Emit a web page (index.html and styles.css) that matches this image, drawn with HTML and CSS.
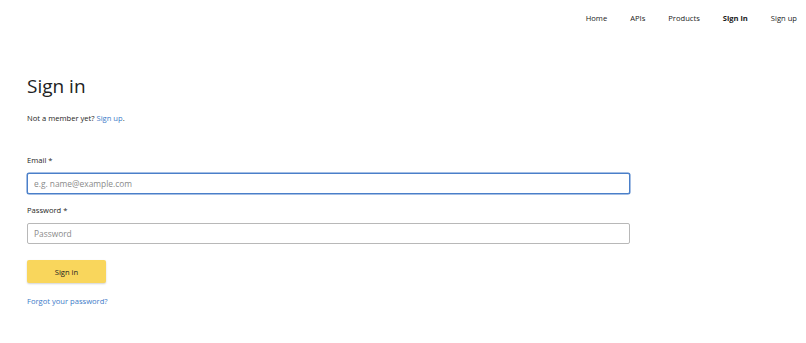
FILE: index.html
```html
<!DOCTYPE html>
<html>
<head>
<meta charset="utf-8">
<link rel="stylesheet" href="styles.css">
</head>
<body>
<header class="topbar">
  <nav class="nav">
    <a class="nav-link" href="#">Home</a>
    <a class="nav-link" href="#">APIs</a>
    <a class="nav-link" href="#">Products</a>
    <a class="nav-link active" href="#">Sign in</a>
    <a class="nav-link" href="#">Sign up</a>
  </nav>
</header>
<main class="main">
  <h1 class="title">Sign in</h1>
  <p class="note">Not a member yet? <a class="link" href="#">Sign up</a>.</p>
  <form class="form">
    <div class="field">
      <label class="label">Email *</label>
      <input class="input focused" type="text" placeholder="e.g. name@example.com">
    </div>
    <div class="field">
      <label class="label">Password *</label>
      <input class="input" type="password" placeholder="Password">
    </div>
    <button class="btn" type="button">Sign in</button>
  </form>
  <a class="link forgot" href="#">Forgot your password?</a>
</main>
</body>
</html>
```
FILE: styles.css
```css
* { box-sizing: border-box; }
html, body { margin: 0; padding: 0; background: #fff; }
body {
  font-family: "Open Sans", "Liberation Sans", sans-serif;
  color: #1e1e1e;
  font-size: 8px;
}
.topbar {
  display: flex;
  justify-content: flex-end;
  height: 35px;
  align-items: center;
  padding-right: 9px;
}
.nav { display: flex; gap: 23px; }
.nav-link {
  color: #1a1a1a;
  text-decoration: none;
  font-size: 7.6px;
}
.nav-link.active { font-weight: 700; }
.main { padding: 0 27px; width: 630px; box-sizing: content-box; }
.title {
  font-weight: 400;
  font-size: 19px;
  margin: 38px 0 0;
  line-height: 26px;
  color: #222;
}
.note { margin: 14px 0 0; font-size: 7.6px; line-height: 10px; }
.link { color: #3b7bc8; text-decoration: none; font-size: 7.6px; }
.form { margin-top: 32px; display: flex; flex-direction: column; }
.field { display: flex; flex-direction: column; margin-bottom: 11px; }
.label { font-size: 7.6px; line-height: 10px; margin-bottom: 8px; }
.input {
  width: 603px;
  height: 21px;
  border: 1px solid #b8b8b8;
  border-radius: 2px;
  padding: 0 6px;
  font-family: inherit;
  font-size: 8.4px;
  color: #333;
  outline: none;
}
.input::placeholder { color: #8a8a8a; }
.input.focused { border-color: #4a7fc9; box-shadow: 0 0 0 0.5px #4a7fc9; }
.btn {
  align-self: flex-start;
  margin-top: 5px;
  width: 79px;
  height: 23px;
  border: none;
  border-radius: 2px;
  background: #f9d65c;
  box-shadow: 0 1px 2px rgba(0,0,0,0.18);
  font-family: inherit;
  font-size: 7.6px;
  color: #222;
}
.forgot { display: inline-block; margin-top: 13px; }
```
